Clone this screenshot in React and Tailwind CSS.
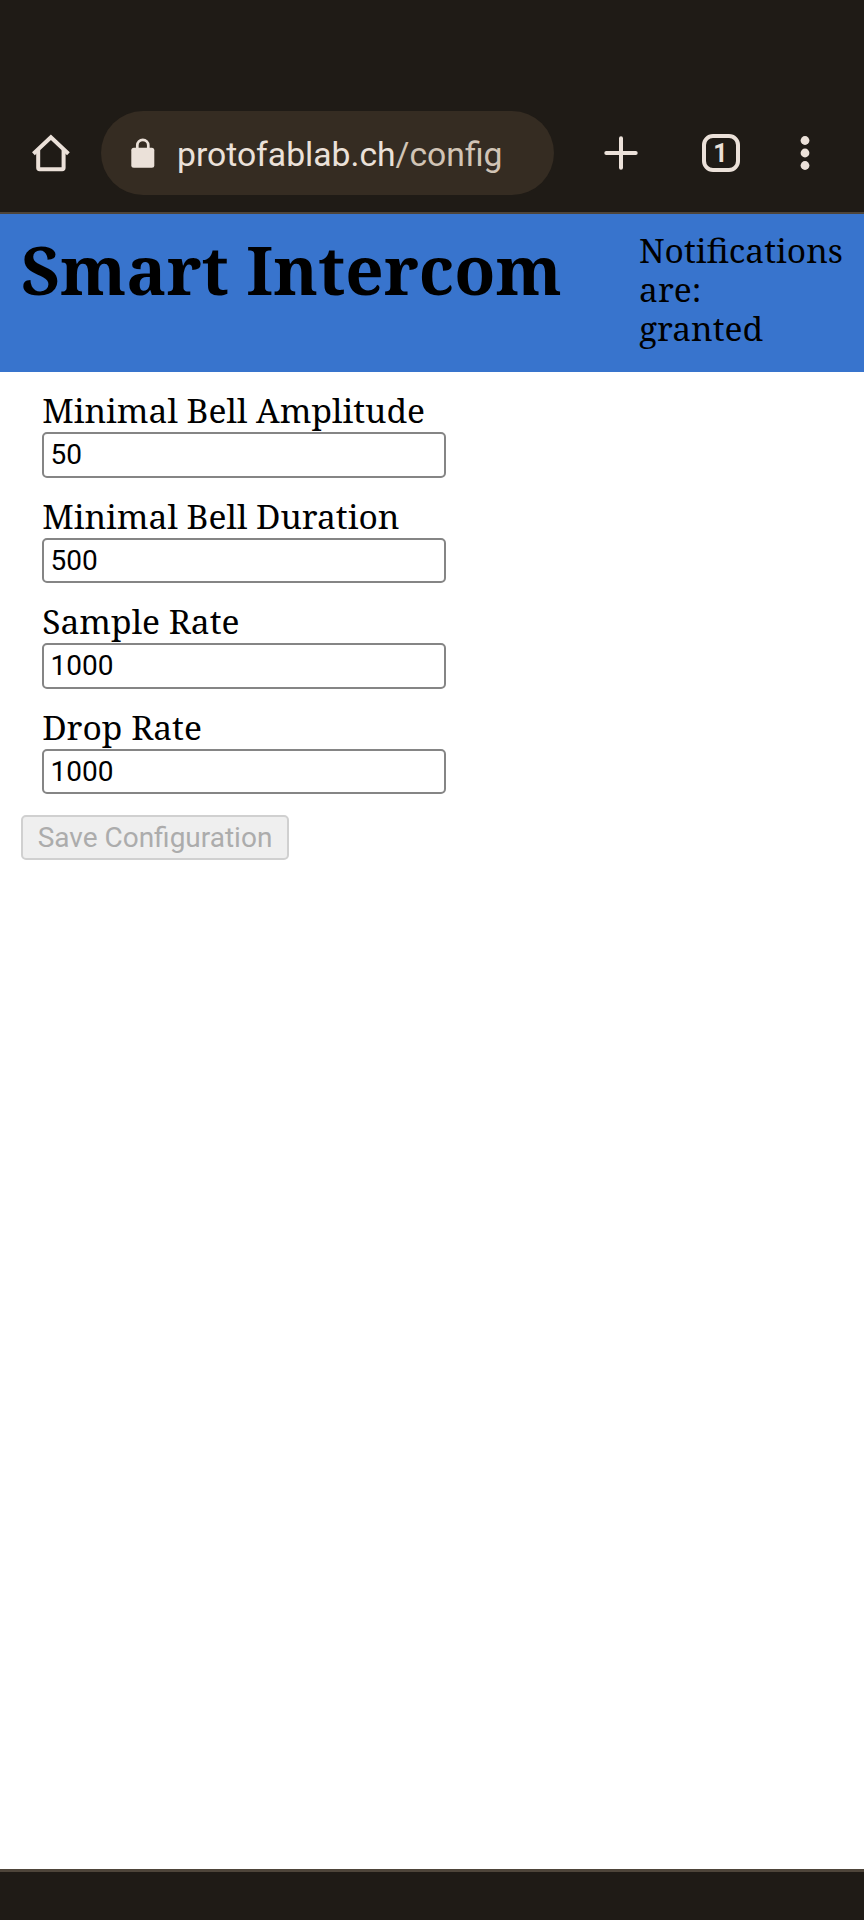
const FIELDS = [
  { label: "Minimal Bell Amplitude", value: "50" },
  { label: "Minimal Bell Duration", value: "500" },
  { label: "Sample Rate", value: "1000" },
  { label: "Drop Rate", value: "1000" },
];

function HomeIcon() {
  return (
    <svg className="h-[40px] w-[40px]" viewBox="0 0 40 40" fill="none" stroke="#ebe1d9" strokeWidth="4">
      <path d="M7.200 17V34.800Q7.200 36.200 8.600 36.200H31.200Q32.600 36.200 32.600 34.800V17" strokeLinejoin="round" />
      <path d="M2.400 20.800 19.900 4.300 37.400 20.800" />
    </svg>
  );
}

function BrowserBar() {
  return (
    <div className="flex h-[214px] w-full shrink-0 items-end border-b-2 border-[#4e453a] bg-[#1f1b16] pb-[17px]">
      <div className="flex h-[84px] w-full items-center">
        <div className="ml-[31px] h-[40px] w-[40px] shrink-0"><HomeIcon /></div>
        <div className="ml-[30px] flex h-[84px] w-[453px] shrink-0 items-center rounded-full bg-[#352c22] pl-[30px]">
          <svg className="h-[30px] w-[24px] shrink-0" viewBox="0 0 24 30">
            <rect x="0.300" y="9.700" width="23" height="20" rx="2.500" fill="#ebe1d9" />
            <path d="M6.300 11V7.300a5.500 5.500 0 0 1 11 0V11" fill="none" stroke="#ebe1d9" strokeWidth="2.700" />
          </svg>
          <span className="ml-[22px] whitespace-nowrap pt-[4px] font-['Roboto',sans-serif] text-[33.700px] leading-[40px] text-[#ebe1d9]">
            protofablab.ch<span className="text-[#d1c4b5]">/config</span>
          </span>
        </div>
        <svg className="ml-[50px] h-[34px] w-[34px] shrink-0" viewBox="0 0 34 34" stroke="#ebe1d9" strokeWidth="4" strokeLinecap="round">
          <path d="M17 2.300V31.700M2.300 17H31.700" />
        </svg>
        <div className="ml-[64px] flex h-[38px] w-[38px] shrink-0 items-center justify-center rounded-[11px] border-4 border-[#ebe1d9] pr-px font-['Roboto',sans-serif] text-[25px] font-bold leading-none text-[#ebe1d9]">
          1
        </div>
        <svg className="ml-[60px] h-[36px] w-[10px] shrink-0" viewBox="0 0 10 36" fill="#ebe1d9">
          <circle cx="5" cy="5.500" r="4.400" />
          <circle cx="5" cy="18" r="4.400" />
          <circle cx="5" cy="30.500" r="4.400" />
        </svg>
      </div>
    </div>
  );
}

export default function App() {
  return (
    <div className="flex h-[1920px] w-[864px] flex-col overflow-hidden bg-white font-['Noto_Serif','DejaVu_Serif_Condensed','DejaVu_Serif',serif] text-black">
      <BrowserBar />
      <header className="flex h-[158px] shrink-0 justify-between bg-[#3874cd] pl-[21px]">
        <h1 className="whitespace-nowrap pt-[15px] text-[67.200px] font-bold leading-[80px]">Smart Intercom</h1>
        <p className="w-[225px] pt-[17px] text-[33.600px] leading-[39.200px]">
          Notifications<br />are:<br />granted
        </p>
      </header>
      <main className="flex flex-1 flex-col">
        <div className="flex flex-col pl-[42.200px] pt-[20px]">
          {FIELDS.map((f) => (
            <label key={f.label} className="flex h-[105.600px] flex-col">
              <span className="h-[40px] whitespace-nowrap text-[33.600px] leading-[37px]">{f.label}</span>
              <input
                defaultValue={f.value}
                className="h-[45.500px] w-[403.500px] rounded-[5px] border-2 border-[#858585] bg-white px-[6.300px] font-['Roboto',sans-serif] text-[28px]"
              />
            </label>
          ))}
        </div>
        <button
          disabled
          className="ml-[21px] mt-[1px] h-[45px] w-[268px] rounded-[5px] border-2 border-[#d0d0d0] bg-[#efefef] font-['Roboto',sans-serif] text-[28px] leading-none text-[#acacac]"
        >
          Save Configuration
        </button>
      </main>
      <div className="h-[51px] shrink-0 border-t-[3px] border-[#4e453a] bg-[#1f1b16]" />
    </div>
  );
}
